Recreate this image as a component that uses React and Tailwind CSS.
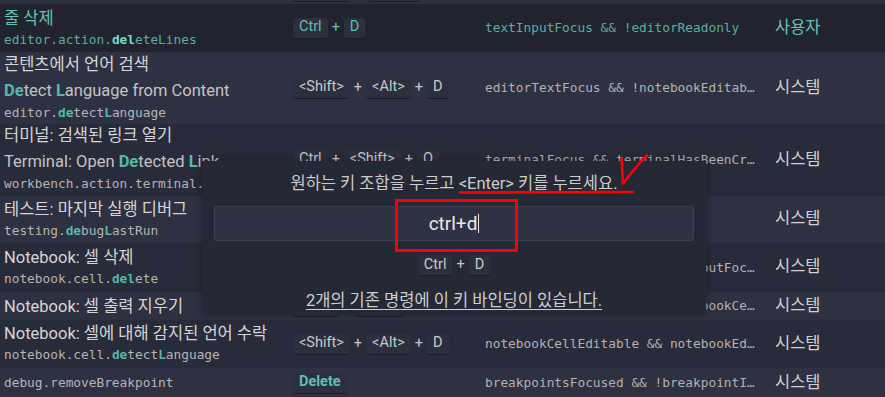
import React, { Fragment } from "react";

const SANS = "font-['Roboto','Noto_Sans_CJK_KR',sans-serif]";
const MONO = "font-['DejaVu_Sans_Mono','Liberation_Mono',monospace]";

function Key({ children, teal, bold }) {
  return (
    <span
      className={`inline-flex h-[21px] shrink-0 items-center rounded-[3px] border-b border-[#1a1c24] bg-[#2c2f3d] px-[6px] text-[14.5px] leading-none ${SANS} ${
        teal ? "text-[#5fc0b1]" : "text-[#c8c8c8]"
      } ${bold ? "font-bold" : ""}`}
    >
      {children}
    </span>
  );
}

function Combo({ keys, teal }) {
  return (
    <div className="flex items-center">
      {keys.map((k, i) => (
        <Fragment key={i}>
          {i > 0 && (
            <span
              className={`mx-[4px] text-[14.5px] leading-none ${SANS} ${
                teal ? "text-[#5fc0b1]" : "text-[#c8c8c8]"
              }`}
            >
              +
            </span>
          )}
          <Key teal={teal}>{k}</Key>
        </Fragment>
      ))}
    </div>
  );
}

function Hl({ children, teal }) {
  return (
    <span className={`font-bold ${teal ? "text-[#74dccb]" : "text-[#55b9aa]"}`}>
      {children}
    </span>
  );
}

function Title({ children, teal }) {
  return (
    <div
      className={`whitespace-nowrap text-[16.5px] leading-[22px] ${SANS} ${
        teal ? "text-[#66c3b5]" : "text-[#d6d6d6]"
      }`}
    >
      {children}
    </div>
  );
}

function Eng({ children }) {
  return (
    <div
      className={`whitespace-nowrap pt-[3px] text-[16.5px] leading-[24px] text-[#c4c4c4] ${SANS}`}
    >
      {children}
    </div>
  );
}

function Id({ children, teal }) {
  return (
    <div
      className={`whitespace-nowrap text-[12.8px] leading-[20px] ${MONO} ${
        teal ? "text-[#5aaea2]" : "text-[#b5b5b5]"
      }`}
    >
      {children}
    </div>
  );
}

function Row({ rowClass, cmdClass, cmd, keys, when, source, teal }) {
  return (
    <div className={`flex shrink-0 overflow-hidden ${rowClass}`}>
      <div className={`flex w-[293px] shrink-0 flex-col pl-[4px] ${cmdClass}`}>
        {cmd}
      </div>
      <div className="flex w-[192px] shrink-0 items-center">{keys}</div>
      <div
        className={`flex w-[290px] shrink-0 items-center whitespace-nowrap text-[12.8px] ${MONO} ${
          teal ? "text-[#5aaea2]" : "text-[#b2b2b2]"
        }`}
      >
        {when}
      </div>
      <div
        className={`flex items-center text-[16.5px] ${SANS} ${
          teal ? "text-[#66c3b5]" : "text-[#d2d2d2]"
        }`}
      >
        {source}
      </div>
    </div>
  );
}

export default function App() {
  return (
    <div className="relative h-[397px] w-[885px] overflow-hidden bg-[#282b39]">
      <div className="flex flex-col">
        {/* partial top row */}
        <div className="flex h-[4px] shrink-0 items-end overflow-hidden bg-[#2e3141] pb-[2px]">
          <div className="w-[293px] shrink-0" />
          <div className="flex items-center">
            <span className="h-[21px] w-[57px] rounded-[3px] border-b border-[#1a1c24] bg-[#2c2f3d]" />
            <span className="w-[18px]" />
            <span className="h-[21px] w-[52px] rounded-[3px] border-b border-[#1a1c24] bg-[#2c2f3d]" />
          </div>
        </div>

        <Row
          teal
          rowClass="h-[48px] bg-[#21242e]"
          cmdClass="pt-[4px]"
          cmd={
            <>
              <Title teal>줄 삭제</Title>
              <Id teal>
                editor.action.<Hl teal>del</Hl>eteLines
              </Id>
            </>
          }
          keys={<Combo teal keys={["Ctrl", "D"]} />}
          when="textInputFocus && !editorReadonly"
          source="사용자"
        />

        <Row
          rowClass="h-[72px] bg-[#2e3141]"
          cmdClass="pt-[2px]"
          cmd={
            <>
              <Title>콘텐츠에서 언어 검색</Title>
              <Eng>
                <Hl>De</Hl>tect <Hl>L</Hl>anguage from Content
              </Eng>
              <Id>
                editor.<Hl>de</Hl>tect<Hl>L</Hl>anguage
              </Id>
            </>
          }
          keys={<Combo keys={["<Shift>", "<Alt>", "D"]} />}
          when="editorTextFocus && !notebookEditab…"
          source="시스템"
        />

        <Row
          rowClass="h-[72px] bg-[#282b39]"
          cmdClass="pt-[1px]"
          cmd={
            <>
              <Title>터미널: 검색된 링크 열기</Title>
              <Eng>
                Terminal: Open <Hl>De</Hl>tected <Hl>L</Hl>ink
              </Eng>
              <Id>workbench.action.terminal.openDetectedLink</Id>
            </>
          }
          keys={<Combo keys={["Ctrl", "<Shift>", "O"]} />}
          when="terminalFocus && terminalHasBeenCr…"
          source="시스템"
        />

        <Row
          rowClass="h-[47px] bg-[#2e3141]"
          cmdClass="pt-[3px]"
          cmd={
            <>
              <Title>테스트: 마지막 실행 디버그</Title>
              <Id>
                testing.<Hl>de</Hl>bug<Hl>L</Hl>astRun
              </Id>
            </>
          }
          keys={<Combo keys={["Ctrl", ";", "Ctrl", "L"]} />}
          when=""
          source="시스템"
        />

        <Row
          rowClass="h-[49px] bg-[#282b39]"
          cmdClass="pt-[4px]"
          cmd={
            <>
              <Title>Notebook: 셀 삭제</Title>
              <Id>
                notebook.cell.<Hl>del</Hl>ete
              </Id>
            </>
          }
          keys={<Combo keys={["Delete"]} />}
          when="notebookEditorFocused && !inputFoc…"
          source="시스템"
        />

        <Row
          rowClass="h-[28px] bg-[#2e3141]"
          cmdClass="pt-[4px]"
          cmd={
            <>
              <Title>Notebook: 셀 출력 지우기</Title>
              <Id>notebook.cell.clearOutputs</Id>
            </>
          }
          keys={<Combo keys={["<Alt>", "<Ctrl>"]} />}
          when="notebookEditorFocus && !notebookCe…"
          source="시스템"
        />

        <Row
          rowClass="h-[48px] bg-[#282b39]"
          cmdClass="pt-[3px]"
          cmd={
            <>
              <Title>Notebook: 셀에 대해 감지된 언어 수락</Title>
              <Id>
                notebook.cell.<Hl>de</Hl>tect<Hl>L</Hl>anguage
              </Id>
            </>
          }
          keys={<Combo keys={["<Shift>", "<Alt>", "D"]} />}
          when="notebookCellEditable && notebookEd…"
          source="시스템"
        />

        <Row
          rowClass="h-[30px] bg-[#2e3141]"
          cmdClass="pt-[5px]"
          cmd={<Id>debug.removeBreakpoint</Id>}
          keys={
            <Key teal bold>
              Delete
            </Key>
          }
          when="breakpointsFocused && !breakpointI…"
          source="시스템"
        />
      </div>

      {/* keybinding dialog */}
      <div className="absolute left-[202px] top-[161px] flex h-[153px] w-[504px] flex-col items-center bg-[#252835] shadow-[0_0_8px_1px_rgba(0,0,0,0.25)]">
        <div
          className={`mt-[12px] whitespace-nowrap text-[16.5px] leading-[22px] text-[#cccccc] ${SANS}`}
        >
          원하는 키 조합을 누르고 &lt;Enter&gt; 키를 누르세요.
        </div>
        <div className="mt-[11px] flex h-[35px] w-[480px] items-center justify-center rounded-[2px] border border-[#3b3e50] bg-[#2f3242]">
          <span className={`text-[19px] leading-none text-[#e8e8e8] ${SANS}`}>
            ctrl+d
          </span>
          <span className="ml-[1px] h-[19px] w-[1px] bg-[#e8e8e8]" />
        </div>
        <div className="mt-[14px]">
          <Combo keys={["Ctrl", "D"]} />
        </div>
        <div
          className={`mt-[14px] whitespace-nowrap text-[16.5px] leading-[22px] text-[#cfcfcf] underline underline-offset-[3px] ${SANS}`}
        >
          2개의 기존 명령에 이 키 바인딩이 있습니다.
        </div>
      </div>

      {/* red annotations */}
      <svg
        className="pointer-events-none absolute left-0 top-0"
        width="885"
        height="397"
        viewBox="0 0 885 397"
      >
        <rect
          x="396.5"
          y="200.5"
          width="120"
          height="50"
          fill="none"
          stroke="#ff0000"
          strokeWidth="3"
        />
        <path
          d="M460 192.5 L633 192"
          stroke="#ff0000"
          strokeWidth="2.6"
          strokeLinecap="round"
          fill="none"
        />
        <path
          d="M621.5 158 L623 183.5 L633 171 L640.5 162 L647 155.5"
          stroke="#ff0000"
          strokeWidth="2.6"
          strokeLinecap="round"
          strokeLinejoin="round"
          fill="none"
        />
      </svg>
    </div>
  );
}
